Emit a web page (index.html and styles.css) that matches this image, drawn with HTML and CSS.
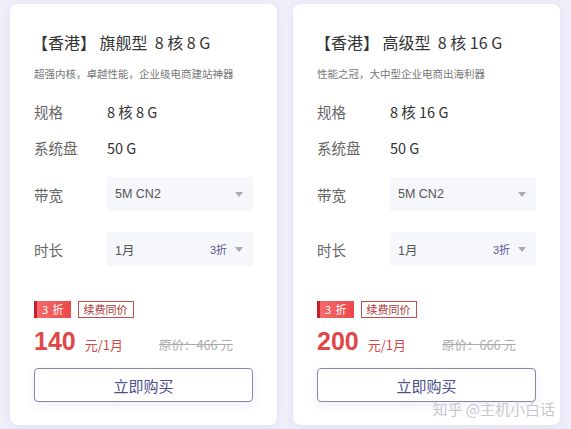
FILE: index.html
```html
<!DOCTYPE html>
<html>
<head>
  <title>香港云服务器</title>
  <link rel="stylesheet" href="styles.css">
</head>
<body>
  <div class="cards">
    <div class="card">
      <h2 class="title">【香港】 旗舰型&nbsp;&nbsp;8 核 8 G</h2>
      <p class="desc">超强内核，卓越性能，企业级电商建站神器</p>
      <div class="row"><span class="label">规格</span><span class="value">8 核 8 G</span></div>
      <div class="row"><span class="label">系统盘</span><span class="value">50 G</span></div>
      <div class="row sel-row">
        <span class="label">带宽</span>
        <div class="select"><span>5M CN2</span><span class="arrow"></span></div>
      </div>
      <div class="row sel-row">
        <span class="label">时长</span>
        <div class="select"><span>1月</span><span class="right"><span class="off">3折</span><span class="arrow"></span></span></div>
      </div>
      <div class="tags">
        <span class="tag-red">3 折</span>
        <span class="tag-line">续费同价</span>
      </div>
      <div class="price">
        <span class="num">140</span><span class="unit">元/1月</span>
        <span class="old">原价：466 元</span>
      </div>
      <button class="buy">立即购买</button>
    </div>

    <div class="card">
      <h2 class="title">【香港】 高级型&nbsp;&nbsp;8 核 16 G</h2>
      <p class="desc">性能之冠，大中型企业电商出海利器</p>
      <div class="row"><span class="label">规格</span><span class="value">8 核 16 G</span></div>
      <div class="row"><span class="label">系统盘</span><span class="value">50 G</span></div>
      <div class="row sel-row">
        <span class="label">带宽</span>
        <div class="select"><span>5M CN2</span><span class="arrow"></span></div>
      </div>
      <div class="row sel-row">
        <span class="label">时长</span>
        <div class="select"><span>1月</span><span class="right"><span class="off">3折</span><span class="arrow"></span></span></div>
      </div>
      <div class="tags">
        <span class="tag-red">3 折</span>
        <span class="tag-line">续费同价</span>
      </div>
      <div class="price">
        <span class="num">200</span><span class="unit">元/1月</span>
        <span class="old">原价：666 元</span>
      </div>
      <button class="buy">立即购买</button>
    </div>
  </div>
  <div class="watermark">知乎 @主机小白话</div>
</body>
</html>
```

FILE: styles.css
```css
html,
body {
  margin: 0;
  height: 100%;
}
body {
  background: #efeffa;
  font-family: "Noto Sans CJK SC", "Noto Sans", sans-serif;
  color: #333;
  overflow: hidden;
  position: relative;
}
.cards {
  display: flex;
  gap: 16px;
  padding: 4px 0 0 10px;
}
.card {
  width: 267px;
  height: 421px;
  box-sizing: border-box;
  background: #fff;
  border-radius: 8px;
  box-shadow: 0 2px 10px rgba(120, 120, 200, 0.12);
  padding: 28px 24px 0 24px;
  display: flex;
  flex-direction: column;
}
.title {
  margin: 0 0 0 -2px;
  font-size: 16px;
  font-weight: normal;
  line-height: 20px;
  color: #333;
}
.desc {
  margin: 15px 0 0 0;
  font-size: 10.5px;
  line-height: 14px;
  color: #777;
}
.row {
  display: flex;
  align-items: center;
  font-size: 14.5px;
  height: 20px;
}
.row:nth-of-type(1) {
  margin-top: 20px;
}
.row + .row {
  margin-top: 16px;
}
.label {
  width: 73px;
  color: #666;
  flex-shrink: 0;
}
.value {
  color: #333;
}
.sel-row {
  height: 34px;
}
.row + .sel-row {
  margin-top: 20px;
}
.sel-row + .sel-row {
  margin-top: 21px;
}
.select {
  flex: 1;
  height: 34px;
  background: #f6f7fb;
  display: flex;
  align-items: center;
  justify-content: space-between;
  padding: 0 10px 0 8px;
  font-family: "Liberation Sans", "Noto Sans CJK SC", sans-serif;
  font-size: 12.5px;
  color: #555;
}
.right {
  display: flex;
  align-items: center;
  gap: 8px;
}
.off {
  font-size: 11px;
  color: #5a5a9a;
}
.arrow {
  width: 0;
  height: 0;
  border-left: 4px solid transparent;
  border-right: 4px solid transparent;
  border-top: 5px solid #aaa;
}
.tags {
  display: flex;
  gap: 7px;
  margin-top: 35px;
}
.tag-red {
  height: 17px;
  line-height: 17px;
  padding: 0 6px 0 8px;
  font-size: 11px;
  color: #fff;
  background: linear-gradient(90deg, #c8202a 0, #c8202a 3px, #f46a6a 3px, #ec4848 100%);
  letter-spacing: 1px;
}
.tag-line {
  height: 15px;
  line-height: 15px;
  padding: 0 5px;
  font-size: 11px;
  color: #a83838;
  border: 1px solid #c05050;
}
.price {
  display: flex;
  align-items: baseline;
  margin-top: 9px;
  height: 32px;
}
.num {
  font-family: "Liberation Sans", Arial, sans-serif;
  font-weight: bold;
  font-size: 25px;
  color: #e04848;
}
.unit {
  margin-left: 9px;
  font-size: 13px;
  color: #d04848;
}
.old {
  margin-left: 36px;
  font-size: 12.5px;
  color: #aaa;
  text-decoration: line-through;
}
.buy {
  margin-top: 9px;
  height: 34px;
  width: 100%;
  background: #fff;
  border: 1px solid #8586a8;
  border-radius: 4px;
  box-shadow: 0 4px 10px rgba(100, 100, 180, 0.1);
  font-family: "Noto Sans CJK SC", sans-serif;
  font-size: 15px;
  color: #4c4f8c;
  cursor: pointer;
}
.watermark {
  position: absolute;
  right: 16px;
  bottom: 10px;
  font-size: 15px;
  color: rgba(150, 150, 165, 0.55);
  text-shadow: 0 0 2px #fff;
}
```
